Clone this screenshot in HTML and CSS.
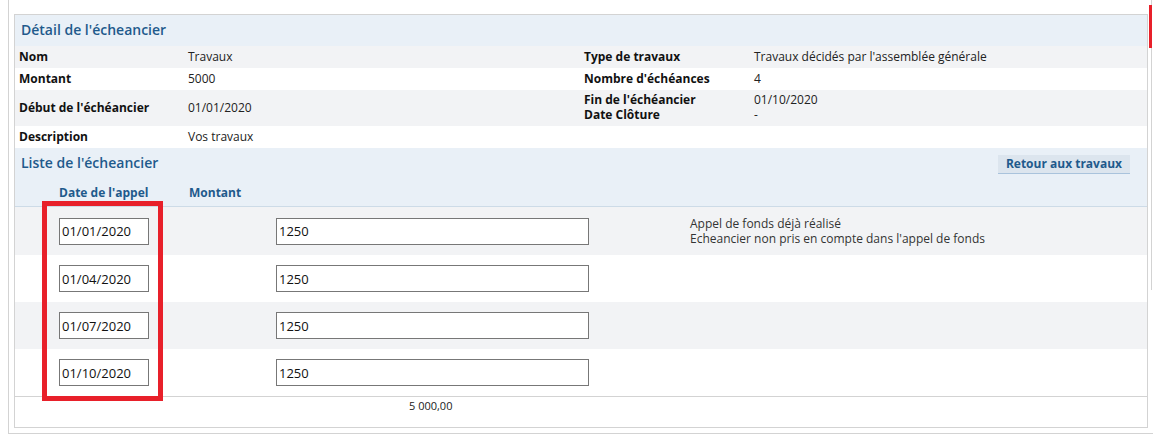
FILE: index.html
```html
<!DOCTYPE html>
<html lang="fr">
<head>
    <meta charset="UTF-8">
    <meta name="viewport" content="width=device-width, initial-scale=1.0">
    <title>Détail de l'écheancier</title>
    <link rel="stylesheet" href="styles.css">
</head>
<body>
    <div class="frame">
        <div class="panel">
            <div class="panel-title">Détail de l'écheancier</div>

            <div class="detail-row alt">
                <div class="label">Nom</div>
                <div class="value">Travaux</div>
                <div class="label">Type de travaux</div>
                <div class="value">Travaux décidés par l'assemblée générale</div>
            </div>
            <div class="detail-row">
                <div class="label">Montant</div>
                <div class="value">5000</div>
                <div class="label">Nombre d'échéances</div>
                <div class="value">4</div>
            </div>
            <div class="detail-row alt tall">
                <div class="label">Début de l'échéancier</div>
                <div class="value">01/01/2020</div>
                <div class="label stack">Fin de l'échéancier<br>Date Clôture</div>
                <div class="value stack">01/10/2020<br>-</div>
            </div>
            <div class="detail-row">
                <div class="label">Description</div>
                <div class="value">Vos travaux</div>
            </div>

            <div class="list-head">
                <div class="list-top">
                    <div class="list-title">Liste de l'écheancier</div>
                    <button class="btn-back">Retour aux travaux</button>
                </div>
                <div class="col-heads">
                    <div class="col-date">Date de l'appel</div>
                    <div class="col-amount">Montant</div>
                </div>
            </div>

            <div class="call-row alt first">
                <input class="in-date" type="text" value="01/01/2020">
                <input class="in-amount" type="text" value="1250">
                <div class="note">Appel de fonds déjà réalisé<br>Echeancier non pris en compte dans l'appel de fonds</div>
            </div>
            <div class="call-row">
                <input class="in-date" type="text" value="01/04/2020">
                <input class="in-amount" type="text" value="1250">
            </div>
            <div class="call-row alt">
                <input class="in-date" type="text" value="01/07/2020">
                <input class="in-amount" type="text" value="1250">
            </div>
            <div class="call-row">
                <input class="in-date" type="text" value="01/10/2020">
                <input class="in-amount" type="text" value="1250">
            </div>

            <div class="total">5 000,00</div>
        </div>

        <!-- annotation + scrollbar -->
        <div class="highlight"></div>
        <div class="scroll-track"></div>
        <div class="scroll-thumb"></div>
    </div>
</body>
</html>
```

FILE: styles.css
```css
:root {
    --title-blue: #1f5a8c;
    --row-alt: #f2f3f5;
    --head-bg: #e9f0f7;
    --line: #d3d3d3;
    --mark-red: #e8202a;
}

body {
    margin: 0;
    background: #fff;
    font-family: 'Open Sans', 'Noto Sans', sans-serif;
    font-size: 12px;
    color: #222;
    overflow: hidden;
}

.frame {
    position: relative;
    width: 1139px;
    margin-left: 8px;
    padding: 14px 0 5px 5px;
    border-left: 1px solid var(--line);
    border-bottom: 1px solid var(--line);
}

.panel {
    width: 1132px;
    border: 1px solid var(--line);
}

.panel-title {
    height: 31px;
    line-height: 29px;
    padding-left: 6px;
    background: var(--head-bg);
    color: var(--title-blue);
    font-size: 14px;
    font-weight: 600;
}

.detail-row {
    display: grid;
    grid-template-columns: 169px 396px 170px 1fr;
    align-items: center;
    box-sizing: border-box;
    height: 22px;
    padding: 0 0 2px 4px;
}

.detail-row.tall {
    height: 36px;
}

.alt {
    background: var(--row-alt);
}

.label {
    font-weight: 700;
    color: #111;
}

.stack {
    line-height: 15px;
}

/* List section */
.list-head {
    height: 58px;
    background: var(--head-bg);
    border-bottom: 1px solid #cddbe7;
}

.list-top {
    display: flex;
    justify-content: space-between;
    align-items: flex-start;
    padding: 6px 17px 0 6px;
}

.list-title {
    color: var(--title-blue);
    font-size: 14px;
    font-weight: 600;
    line-height: 17px;
}

.btn-back {
    height: 19px;
    padding: 0 8px;
    margin-top: 1px;
    border: 0;
    border-bottom: 1px solid #a9c3dc;
    background: #dce5ee;
    color: var(--title-blue);
    font-family: inherit;
    font-size: 12px;
    font-weight: 700;
    line-height: 18px;
}

.col-heads {
    display: flex;
    padding: 10px 0 0 44px;
    color: var(--title-blue);
    font-weight: 700;
    font-size: 12px;
}

.col-date {
    width: 130px;
}

.call-row {
    display: flex;
    align-items: center;
    height: 47px;
    padding-left: 44px;
}

.call-row.first {
    height: 48px;
}

.call-row input {
    box-sizing: border-box;
    height: 27px;
    padding: 0 2px;
    border: 1px solid #777;
    border-radius: 0;
    font-family: inherit;
    font-size: 13px;
    color: #111;
}

.in-date {
    width: 90px;
    margin-right: 127px;
}

.in-amount {
    width: 313px;
    margin-right: 101px;
}

.note {
    line-height: 15px;
    color: #333;
}

.total {
    height: 30px;
    border-top: 1px solid var(--line);
    padding-left: 394px;
    font-size: 11px;
    line-height: 17px;
}

/* Red annotation box */
.highlight {
    position: absolute;
    left: 33px;
    top: 201px;
    width: 121px;
    height: 200px;
    box-sizing: border-box;
    border: 5px solid var(--mark-red);
}

.scroll-track {
    position: absolute;
    left: 1142px;
    top: 0;
    width: 1px;
    height: 290px;
    background: var(--line);
}

.scroll-thumb {
    position: absolute;
    left: 1140px;
    top: 5px;
    width: 3px;
    height: 43px;
    background: var(--mark-red);
}
```
